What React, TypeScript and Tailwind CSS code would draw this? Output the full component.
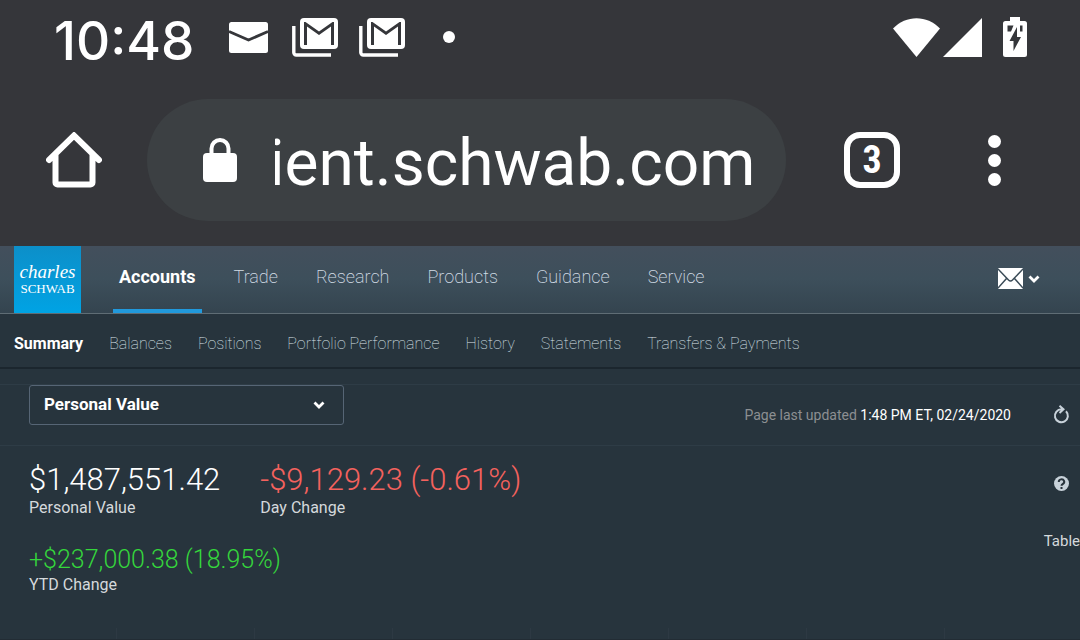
import { useState } from "react";

const mainMenu = ["Accounts", "Trade", "Research", "Products", "Guidance", "Service"];

const subMenu = [
  "Summary",
  "Balances",
  "Positions",
  "Portfolio Performance",
  "History",
  "Statements",
  "Transfers & Payments",
];

function GmailIcon() {
  return (
    <svg width="46" height="39" viewBox="0 0 46 39" aria-hidden="true">
      <path d="M1.8 8v26.5a2.5 2.5 0 0 0 2.5 2.5H39" fill="none" stroke="#fff" strokeWidth="3.4" />
      <rect x="8" width="38" height="31" rx="4" fill="#fff" />
      <path
        d="M12 27V4h1.500L27 13.500 40.500 4H42v23h-3V8.500L27 17 15 8.500V27Z"
        fill="#35363a"
      />
    </svg>
  );
}

function Chevron() {
  return (
    <svg width="12" height="8" viewBox="0 0 12 8" aria-hidden="true">
      <path d="M1.500 1.500 6 6l4.500-4.500" fill="none" stroke="#fff" strokeWidth="2.800" />
    </svg>
  );
}

function StatusBar() {
  return (
    <div className="flex h-[74px] items-center justify-between pr-[53px] pl-[54px]">
      <div className="flex items-center">
        <time className="w-[175px] pt-2 font-[Inter,sans-serif] text-[53px] leading-[64px] font-medium">
          10:48
        </time>
        <svg width="39" height="31" viewBox="0 0 39 31" aria-hidden="true">
          <rect width="39" height="31" rx="2.500" fill="#fff" />
          <path d="M0 9.500 19.500 18 39 9.500" fill="none" stroke="#35363a" strokeWidth="2.800" />
        </svg>
        <div className="ml-6 flex gap-[21px]">
          <GmailIcon />
          <GmailIcon />
        </div>
        <span className="ml-[38px] size-3 rounded-full bg-white" />
      </div>
      <div className="flex items-center">
        <svg width="47" height="39" viewBox="0 0 47 39" aria-hidden="true">
          <path d="M0 10.500C13-3.300 34-3.300 47 10.500L23.500 39Z" fill="#fff" />
        </svg>
        <svg className="ml-[3px]" width="39" height="39" viewBox="0 0 39 39" aria-hidden="true">
          <path d="M0 39 39 0v39Z" fill="#fff" />
        </svg>
        <svg className="ml-[21px]" width="24" height="40" viewBox="0 0 24 40" aria-hidden="true">
          <path
            d="M7 0h10v4h4.500A2.500 2.500 0 0 1 24 6.500v31a2.500 2.500 0 0 1-2.500 2.500h-19A2.500 2.500 0 0 1 0 37.500v-31A2.500 2.500 0 0 1 2.500 4H7Z"
            fill="#fff"
          />
          <path d="M4.500 8.500h6l-2.500 6H4.500ZM17 8.500h2.500v6H17Z" fill="#35363a" />
          <path d="M14 10v10h4L10.500 34V24H6.500Z" fill="#35363a" />
        </svg>
      </div>
    </div>
  );
}

function BrowserBar() {
  const [url, setUrl] = useState("ient.schwab.com");

  return (
    <div className="flex items-center pt-[25px] pr-[78px] pb-[25px] pl-[46px]">
      <button type="button" aria-label="Home">
        <svg width="56" height="56" viewBox="0 0 56 56" aria-hidden="true">
          <path
            d="M3 28 28 3.500 53 28M9.500 23v27.500a2 2 0 0 0 2 2h33a2 2 0 0 0 2-2V23"
            fill="none"
            stroke="#fff"
            strokeWidth="6"
            strokeLinecap="round"
          />
        </svg>
      </button>
      <div className="ml-[45px] flex h-[122px] min-w-0 flex-1 items-center rounded-full bg-[#3c4043] pr-7 pl-14">
        <svg className="shrink-0" width="34" height="44" viewBox="0 0 34 44" aria-hidden="true">
          <rect y="15" width="34" height="29" rx="4" fill="#fff" />
          <path d="M8.500 17v-6.500a8.500 8.500 0 0 1 17 0V17" fill="none" stroke="#fff" strokeWidth="4" />
        </svg>
        <input
          aria-label="Address"
          className="ml-[38px] h-[88px] w-full min-w-0 pt-2 -indent-[6px] text-[64px] outline-none"
          value={url}
          onChange={(e) => setUrl(e.target.value)}
        />
      </div>
      <button
        type="button"
        aria-label="3 open tabs"
        className="ml-[58px] flex size-14 items-center justify-center rounded-[16px] border-[6px] border-white text-[38px] leading-none font-bold"
      >
        <span className="font-[Roboto_Condensed,Roboto]">3</span>
      </button>
      <button type="button" aria-label="More" className="ml-[86px] flex w-4 flex-col items-center gap-[6px]">
        <span className="size-[13px] rounded-full bg-white" />
        <span className="size-[13px] rounded-full bg-white" />
        <span className="size-[13px] rounded-full bg-white" />
      </button>
    </div>
  );
}

function Header() {
  return (
    <header>
      <div className="flex h-[68px] border-b border-[#5f6d75] bg-linear-to-b from-[#434f5c] via-[#3d4f5b] to-[#34444f] pr-10 pl-[14px]">
        <a
          href="#"
          className="flex w-[67px] flex-col items-center bg-linear-to-b from-[#0c8fc9] to-[#00a3e4] pt-4 font-[Liberation_Serif,serif]"
        >
          <span className="text-[19px] leading-[20px] italic">charles</span>
          <span className="text-[13px] leading-[14px]">SCHWAB</span>
        </a>
        <nav className="ml-8 flex flex-1 gap-[26px]">
          {mainMenu.map((item, index) => (
            <a
              key={item}
              href="#"
              className={
                index === 0
                  ? "border-b-4 border-[#2199dc] px-[6px] pt-[18px] text-lg leading-[26px] font-bold"
                  : "px-[6px] pt-[18px] text-lg leading-[26px] font-extralight text-[#d3dde6]"
              }
            >
              {item}
            </a>
          ))}
        </nav>
        <button type="button" aria-label="Messages" className="flex items-center gap-[5px] pb-[2px]">
          <svg width="25" height="21" viewBox="0 0 25 21" aria-hidden="true">
            <rect width="25" height="21" rx="1" fill="#fff" />
            <path
              d="M0 1 10.500 12q2 2 4 0L25 1M0 20l8.500-9.500M25 20l-8.500-9.500"
              fill="none"
              stroke="#3a4b57"
              strokeWidth="1.500"
            />
          </svg>
          <Chevron />
        </button>
      </div>
      <nav className="flex h-[55px] gap-[26px] border-b-2 border-[#1b262e] pt-[17px] pl-[14px]">
        {subMenu.map((item, index) => (
          <a
            key={item}
            href="#"
            className={
              index === 0
                ? "text-base leading-[26px] font-bold"
                : "text-base leading-[26px] font-thin text-[#dde5ec]"
            }
          >
            {item}
          </a>
        ))}
      </nav>
    </header>
  );
}

function Toolbar() {
  return (
    <div className="mt-[15px] flex h-[62px] items-start justify-between border-y border-[#2e3c46] pr-[10px] pl-[29px]">
      <div className="relative w-[315px]">
        <select
          aria-label="Account view"
          className="h-10 w-full appearance-none rounded-[3px] border border-[#566575] pl-[14px] text-[17px] font-bold"
        >
          <option>Personal Value</option>
        </select>
        <span className="pointer-events-none absolute inset-y-0 right-[19px] flex items-center">
          <Chevron />
        </span>
      </div>
      <div className="flex items-center pt-[18px] text-[14px] leading-[24px]">
        <p className="text-[#8c8f92]">
          Page last updated <span className="text-white">1:48 PM ET, 02/24/2020</span>
        </p>
        <button type="button" aria-label="Refresh" className="ml-[42px]">
          <svg width="17" height="20" viewBox="0 0 17 20" aria-hidden="true">
            <path
              d="M13 6.200A6.500 6.500 0 1 1 8.500 4.300H11M6.500.8 10.500 4.300 6.500 8"
              fill="none"
              stroke="#c8d2da"
              strokeWidth="2"
            />
          </svg>
        </button>
      </div>
    </div>
  );
}

function Summary() {
  return (
    <main className="flex items-start justify-between pt-[17px] pl-[29px] text-base leading-[22px] text-[#d5d9dc]">
      <div>
        <dl className="flex gap-10">
          <div className="flex flex-col-reverse">
            <dt>Personal Value</dt>
            <dd className="text-[31px] leading-[34px] font-light text-white">$1,487,551.42</dd>
          </div>
          <div className="flex flex-col-reverse">
            <dt>Day Change</dt>
            <dd className="text-[31px] leading-[34px] font-light text-[#f4625e]">-$9,129.23 (-0.61%)</dd>
          </div>
        </dl>
        <dl className="mt-[26px] flex flex-col-reverse">
          <dt>YTD Change</dt>
          <dd className="text-[25px] leading-[29px] font-light text-[#35d63c]">+$237,000.38 (18.95%)</dd>
        </dl>
      </div>
      <div className="flex flex-col items-end">
        <button type="button" aria-label="Help" className="mt-[13px] mr-[11px]">
          <svg width="15" height="15" viewBox="0 0 15 15" aria-hidden="true">
            <circle cx="7.500" cy="7.500" r="7.500" fill="#c8d2da" />
            <path
              d="M4.800 6a2.700 2.500 0 1 1 4 2Q7.500 8.700 7.500 9.800M7.500 11v2"
              fill="none"
              stroke="#28333c"
              strokeWidth="2"
            />
          </svg>
        </button>
        <button type="button" className="mt-[39px] text-[15px] leading-[22px]">
          Table
        </button>
      </div>
    </main>
  );
}

export default function App() {
  return (
    <div className="flex min-h-screen flex-col overflow-hidden bg-[#27343d] font-[Roboto,sans-serif] text-white">
      <div className="bg-[#35363a]">
        <StatusBar />
        <BrowserBar />
      </div>
      <Header />
      <Toolbar />
      <Summary />
      <div className="mt-auto flex h-3 gap-[137px] border-b border-[#222c34] pl-[116px]">
        {[1, 2, 3, 4, 5, 6, 7].map((line) => (
          <span key={line} className="w-px shrink-0 bg-[#2d3943]" />
        ))}
      </div>
    </div>
  );
}
